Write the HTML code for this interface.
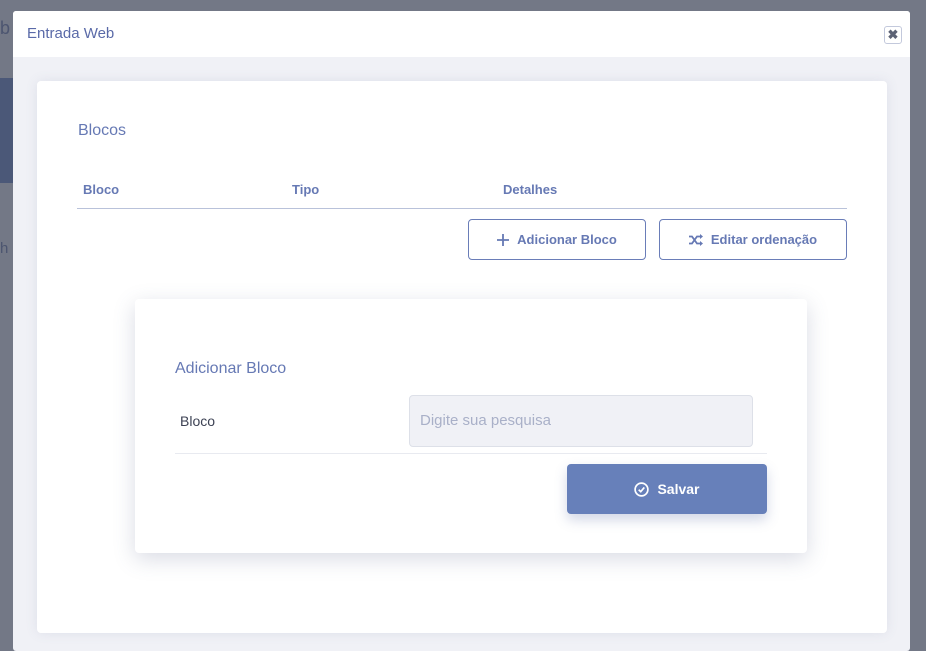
<!DOCTYPE html>
<html><head><meta charset="utf-8"><style>
body{margin:0;width:926px;height:646px;background:#737886;font-family:"Liberation Sans",sans-serif;position:relative;overflow:hidden}
.a{position:absolute}
.modal{left:13px;top:11px;width:897px;height:640px;background:#f0f1f6;border-radius:3px}
.hdr{left:0;top:0;width:897px;height:46px;background:#fff;border-radius:3px 3px 0 0}
.title{left:14px;top:14px;font-size:15px;color:#5a6aa8}
.x{left:871px;top:15px;width:18px;height:18px;border:1px solid #c3c9dc;border-radius:3px;box-sizing:border-box;color:#5c6275;font-size:13px;font-weight:bold;text-align:center;line-height:16px}
.card{left:24px;top:70px;width:850px;height:552px;background:#fff;border-radius:4px;box-shadow:0 0 12px rgba(100,110,150,.12)}
.th{top:101px;font-size:13px;font-weight:bold;color:#6679b4}
.btn{top:138px;height:41px;border:1px solid #6a7db8;border-radius:4px;box-sizing:border-box;color:#6679b4;font-weight:bold;font-size:13px;text-align:center;line-height:39px}
.btn svg{vertical-align:-2px;margin-right:8px}
.inner{left:98px;top:218px;width:672px;height:254px;background:#fff;border-radius:4px;box-shadow:0 6px 22px rgba(80,90,130,.22)}
</style></head><body>
<div class="a" style="left:0;top:18px;font-size:18px;color:#4c5570">b</div>
<div class="a" style="left:0;top:78px;width:13px;height:105px;background:#4b5878"></div>
<div class="a" style="left:0;top:240px;font-size:15px;color:#4c5570">h</div>
<div class="a modal">
 <div class="a hdr"></div>
 <div class="a title">Entrada Web</div>
 <div class="a x">✖</div>
 <div class="a card">
  <div class="a" style="left:41px;top:41px;font-size:16px;color:#6679b4">Blocos</div>
  <div class="a th" style="left:46px">Bloco</div>
  <div class="a th" style="left:255px">Tipo</div>
  <div class="a th" style="left:466px">Detalhes</div>
  <div class="a" style="left:40px;top:127px;width:770px;height:1px;background:#b9c2da"></div>
  <div class="a btn" style="left:431px;width:178px"><svg width="12" height="12" viewBox="0 0 12 12"><path d="M6 0V12M0 6H12" stroke="#6679b4" stroke-width="1.8"/></svg>Adicionar Bloco</div>
  <div class="a btn" style="left:622px;width:188px"><svg width="14" height="12" viewBox="0 0 14 12"><path d="M0 2.5H3L8 9.5H12M0 9.5H3L8 2.5H12" stroke="#6679b4" stroke-width="1.8" fill="none"/><path d="M11 0L14 2.5L11 5ZM11 7L14 9.5L11 12Z" fill="#6679b4"/></svg>Editar ordenação</div>
  <div class="a inner">
   <div class="a" style="left:40px;top:61px;font-size:16px;color:#6679b4">Adicionar Bloco</div>
   <div class="a" style="left:45px;top:114px;font-size:14px;color:#3d4254">Bloco</div>
   <div class="a" style="left:274px;top:96px;width:344px;height:52px;background:#f0f1f6;border:1px solid #dde0e8;border-radius:4px;box-sizing:border-box;padding:16px 10px;font-size:15px;color:#a9b0c8">Digite sua pesquisa</div>
   <div class="a" style="left:40px;top:154px;width:592px;height:1px;background:#e8eaf0"></div>
   <div class="a" style="left:432px;top:165px;width:200px;height:50px;background:#6780ba;border-radius:4px;color:#fff;font-weight:bold;font-size:14px;text-align:center;line-height:50px;box-shadow:0 6px 12px rgba(80,100,160,.25)"><svg width="15" height="15" viewBox="0 0 16 16" style="vertical-align:-3px;margin-right:8px"><circle cx="8" cy="8" r="6.8" stroke="#fff" stroke-width="1.8" fill="none"/><path d="M5 8.3L7.2 10.3L11 5.8" stroke="#fff" stroke-width="1.8" fill="none"/></svg>Salvar</div>
  </div>
 </div>
</div>
</body></html>
